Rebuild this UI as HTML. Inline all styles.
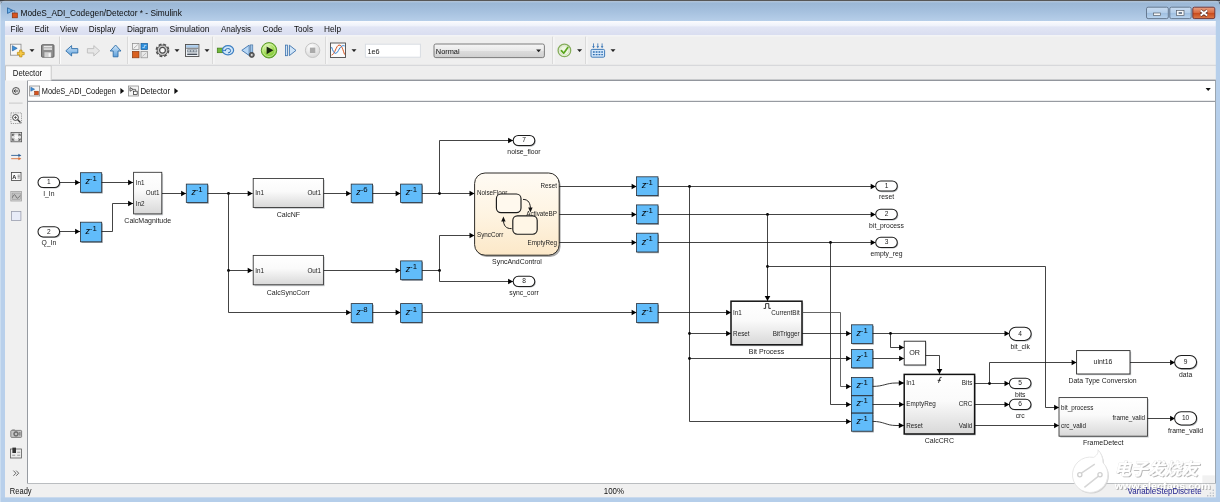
<!DOCTYPE html>
<html lang="en"><head><meta charset="utf-8"><title>ModeS_ADI_Codegen/Detector * - Simulink</title>
<style>
html,body{margin:0;padding:0;background:#b7cfea;overflow:hidden}
body{width:1220px;height:502px;position:relative;font-family:"Liberation Sans","Noto Sans CJK SC",sans-serif}
svg{position:absolute;left:0;top:0;display:block;will-change:transform;transform:translateZ(0)}
svg text{font-family:"Liberation Sans","Noto Sans CJK SC",sans-serif}
</style></head><body>
<svg width="1220" height="502" viewBox="0 0 1220 502">
<defs>
<linearGradient id="title" x1="0" y1="0" x2="0" y2="1"><stop offset="0" stop-color="#97b4d2"/><stop offset=".5" stop-color="#a5c0de"/><stop offset="1" stop-color="#b8d0ea"/></linearGradient>
<linearGradient id="menu" x1="0" y1="0" x2="0" y2="1"><stop offset="0" stop-color="#fbfcfe"/><stop offset=".35" stop-color="#eef1fa"/><stop offset=".4" stop-color="#e2e6f5"/><stop offset="1" stop-color="#d9ddf0"/></linearGradient>
<linearGradient id="g1" x1="0" y1="0" x2="0" y2="1"><stop offset="0" stop-color="#ffffff"/><stop offset=".45" stop-color="#fafafa"/><stop offset="1" stop-color="#d8d8d8"/></linearGradient>
<linearGradient id="chart" x1="0" y1="0" x2="0" y2="1"><stop offset="0" stop-color="#fffbf4"/><stop offset=".5" stop-color="#fef4e2"/><stop offset="1" stop-color="#fce8c8"/></linearGradient>
<linearGradient id="btn" x1="0" y1="0" x2="0" y2="1"><stop offset="0" stop-color="#c9dcf1"/><stop offset=".5" stop-color="#b3cde9"/><stop offset=".52" stop-color="#9fbfe0"/><stop offset="1" stop-color="#b9d3ee"/></linearGradient>
<linearGradient id="cls" x1="0" y1="0" x2="0" y2="1"><stop offset="0" stop-color="#e8a285"/><stop offset=".5" stop-color="#d9683c"/><stop offset=".52" stop-color="#c9491b"/><stop offset="1" stop-color="#dc7a48"/></linearGradient>
<linearGradient id="combo" x1="0" y1="0" x2="0" y2="1"><stop offset="0" stop-color="#f6f6f6"/><stop offset=".5" stop-color="#e9e9e9"/><stop offset=".52" stop-color="#dcdcdc"/><stop offset="1" stop-color="#cfcfcf"/></linearGradient>
<linearGradient id="bluearrow" x1="0" y1="0" x2="0" y2="1"><stop offset="0" stop-color="#d2e7f9"/><stop offset="1" stop-color="#5c9fdb"/></linearGradient>
<radialGradient id="green" cx=".4" cy=".3" r=".8"><stop offset="0" stop-color="#e4f8be"/><stop offset=".55" stop-color="#9ad84a"/><stop offset="1" stop-color="#5fae26"/></radialGradient>
<radialGradient id="greyb" cx=".4" cy=".3" r=".8"><stop offset="0" stop-color="#ffffff"/><stop offset="1" stop-color="#d2d2d2"/></radialGradient>
<filter id="sh" x="-20%" y="-20%" width="140%" height="140%"><feGaussianBlur stdDeviation=".7"/></filter>
</defs>

<rect x="0" y="0" width="1220" height="502" fill="#b7cfea"/>
<rect x="0" y="0" width="1220" height="22" fill="url(#title)"/>
<rect x="0" y="0" width="1220" height="1.25" fill="#575757"/>
<path d="M0 0 H5 Q1.2 1.2 0 5.5 Z" fill="#3e4249"/><path d="M1220 0 H1216 Q1219 1 1220 4.5 Z" fill="#3e4249"/>
<rect x="0" y="1.25" width="1220" height="1" fill="#c9dbee" opacity=".8"/>
<rect x="5" y="21" width="1211" height="14.4" fill="url(#menu)"/>
<rect x="5" y="35.3" width="1211" height="30.2" fill="#efefef"/>
<rect x="5" y="35.3" width="1211" height="1" fill="#f9f9f9"/>
<rect x="5" y="64.8" width="1211" height="1" fill="#d0d0d0"/>
<rect x="5" y="65.8" width="1211" height="15" fill="#eeeeee"/>
<rect x="5" y="80" width="1211" height="22" fill="#f0f0f0"/>
<rect x="27.5" y="80.5" width="1188" height="20.8" fill="#fff" stroke="#979ba1" stroke-width="1"/>
<rect x="5" y="101" width="23" height="396" fill="#f0f0f0"/>
<rect x="27.5" y="101.5" width="1188" height="382" fill="#fff" stroke="#979ba1" stroke-width="1"/>
<rect x="5" y="483.6" width="1211" height="14" fill="#f0f0f0"/>
<rect x="0" y="21" width="5" height="481" fill="#b9d0eb"/>
<rect x="1215.8" y="21" width="4.2" height="481" fill="#b6cfeb"/>
<rect x="0" y="497.6" width="1220" height="4.4" fill="#b5ceea"/>
<rect x="0" y="2" width="1" height="500" fill="#d3e2f2" opacity=".7"/>
<g transform="translate(7,7)"><path d="M0.5 0.8 L6.2 3.6 L0.5 6.4 Z" fill="#6fb2ea" stroke="#1f5f9f" stroke-width=".8"/><path d="M3 3.6 H7.8 V6" fill="none" stroke="#3a6ea5" stroke-width=".7"/><rect x="5.3" y="6" width="5" height="4.8" fill="#d9541e" stroke="#8a2f0a" stroke-width=".7"/></g>
<text x="20.5" y="16.2" font-size="9.6" text-anchor="start" fill="#0d0d0d" textLength="161.4" lengthAdjust="spacingAndGlyphs">ModeS_ADI_Codegen/Detector * - Simulink</text>
<rect x="1146.5" y="7.2" width="21.8" height="11.4" rx="1.6" fill="url(#btn)" stroke="#5f7288" stroke-width=".9"/>
<rect x="1169.8" y="7.2" width="21.4" height="11.4" rx="1.6" fill="url(#btn)" stroke="#5f7288" stroke-width=".9"/>
<rect x="1192.8" y="7.2" width="22" height="11.4" rx="1.6" fill="url(#cls)" stroke="#6d2a2a" stroke-width=".9"/>
<rect x="1153.4" y="13" width="7.2" height="2.6" fill="#f4f6f8" stroke="#57606b" stroke-width=".7"/>
<rect x="1176.6" y="10.4" width="7.4" height="5.2" fill="#f4f6f8" stroke="#57606b" stroke-width=".7"/><rect x="1178.6" y="12.2" width="3.4" height="1.6" fill="#53657c"/>
<path d="M1200.6 10.6 L1207.2 15.6 M1207.2 10.6 L1200.6 15.6" stroke="#5a2a20" stroke-width="3.2"/><path d="M1200.6 10.6 L1207.2 15.6 M1207.2 10.6 L1200.6 15.6" stroke="#fff" stroke-width="1.9"/>
<text x="10.5" y="32.2" font-size="9.2" text-anchor="start" fill="#111" textLength="13" lengthAdjust="spacingAndGlyphs">File</text>
<text x="34.5" y="32.2" font-size="9.2" text-anchor="start" fill="#111" textLength="14.3" lengthAdjust="spacingAndGlyphs">Edit</text>
<text x="60" y="32.2" font-size="9.2" text-anchor="start" fill="#111" textLength="17.6" lengthAdjust="spacingAndGlyphs">View</text>
<text x="88.8" y="32.2" font-size="9.2" text-anchor="start" fill="#111" textLength="26.7" lengthAdjust="spacingAndGlyphs">Display</text>
<text x="127" y="32.2" font-size="9.2" text-anchor="start" fill="#111" textLength="31" lengthAdjust="spacingAndGlyphs">Diagram</text>
<text x="169.5" y="32.2" font-size="9.2" text-anchor="start" fill="#111" textLength="40" lengthAdjust="spacingAndGlyphs">Simulation</text>
<text x="221" y="32.2" font-size="9.2" text-anchor="start" fill="#111" textLength="30" lengthAdjust="spacingAndGlyphs">Analysis</text>
<text x="262.5" y="32.2" font-size="9.2" text-anchor="start" fill="#111" textLength="20" lengthAdjust="spacingAndGlyphs">Code</text>
<text x="294" y="32.2" font-size="9.2" text-anchor="start" fill="#111" textLength="19" lengthAdjust="spacingAndGlyphs">Tools</text>
<text x="324" y="32.2" font-size="9.2" text-anchor="start" fill="#111" textLength="17" lengthAdjust="spacingAndGlyphs">Help</text>
<rect x="59" y="36.6" width="1" height="27.4" fill="#d2d2d2"/><rect x="60" y="36.6" width="1" height="27.4" fill="#fbfbfb"/>
<rect x="127.3" y="36.6" width="1" height="27.4" fill="#d2d2d2"/><rect x="128.3" y="36.6" width="1" height="27.4" fill="#fbfbfb"/>
<rect x="212.3" y="36.6" width="1" height="27.4" fill="#d2d2d2"/><rect x="213.3" y="36.6" width="1" height="27.4" fill="#fbfbfb"/>
<rect x="325.3" y="36.6" width="1" height="27.4" fill="#d2d2d2"/><rect x="326.3" y="36.6" width="1" height="27.4" fill="#fbfbfb"/>
<rect x="552.3" y="36.6" width="1" height="27.4" fill="#d2d2d2"/><rect x="553.3" y="36.6" width="1" height="27.4" fill="#fbfbfb"/>
<rect x="585.3" y="36.6" width="1" height="27.4" fill="#d2d2d2"/><rect x="586.3" y="36.6" width="1" height="27.4" fill="#fbfbfb"/>
<g transform="translate(10,43.7)"><rect x=".5" y=".5" width="10.5" height="11" fill="#f7f7f7" stroke="#8a8a8a" stroke-width=".8"/><path d="M2.4 2 L7.2 4.6 L2.4 7.2 Z" fill="#3d8fd8" stroke="#1e5a98" stroke-width=".6"/><path d="M7.4 8.6 h2.2 v-2.2 h2.4 v2.2 h2.2 v2.4 h-2.2 v2.2 h-2.4 v-2.2 h-2.2 Z" fill="#f7c948" stroke="#b98a10" stroke-width=".7"/></g>
<path d="M29.5 49.2 h5 l-2.5 2.7 Z" fill="#222"/>
<g transform="translate(41,44.2)"><rect x=".5" y=".5" width="12.5" height="12.5" rx="1" fill="#8d8d8d" stroke="#5e5e5e" stroke-width=".9"/><rect x="2.6" y="1.6" width="8.4" height="4" fill="#e8e8e8"/><rect x="2.6" y="3.2" width="8.4" height=".9" fill="#9a9a9a"/><rect x="3.4" y="8" width="6.8" height="5" fill="#d0d0d0"/><rect x="7.6" y="9" width="2" height="3.6" fill="#f6f6f6"/></g>
<path transform="translate(0,.6)" d="M65.8 50.2 L71.6 45 V48 H77.8 V52.4 H71.6 V55.4 Z" fill="url(#bluearrow)" stroke="#2f6ea8" stroke-width=".9" stroke-linejoin="round"/>
<path transform="translate(0,.6)" d="M99.6 50.2 L93.8 45 V48 H87.4 V52.4 H93.8 V55.4 Z" fill="#e6e6e6" stroke="#bdbdbd" stroke-width=".9" stroke-linejoin="round"/>
<path transform="translate(0,.4)" d="M115.6 44.6 L121 50.6 H118 V56.4 H113.2 V50.6 H110.2 Z" fill="url(#bluearrow)" stroke="#2f6ea8" stroke-width=".9" stroke-linejoin="round"/>
<g transform="translate(132,43)"><rect x=".4" y=".4" width="6.6" height="6.2" fill="#f2f2f2" stroke="#8a8a8a" stroke-width=".7"/><path d="M1.6 5.4 L5.8 1.6" stroke="#9a9a9a" stroke-width=".7"/><rect x="9" y=".4" width="6.6" height="6.2" fill="#2d8fdd" stroke="#1c5c98" stroke-width=".7"/><path d="M10.4 4.6 h2 v-2.2 h2" fill="none" stroke="#d8ecfb" stroke-width=".7"/><rect x=".4" y="8.4" width="6.6" height="6.4" fill="#d9601f" stroke="#8a3a10" stroke-width=".7"/><rect x="9" y="8.4" width="6.6" height="6.4" fill="#e9e9e9" stroke="#8a8a8a" stroke-width=".7"/><path d="M10.4 13.4 L14.4 9.8" stroke="#aaa" stroke-width=".7"/></g>
<g transform="translate(162.5,50.3)"><circle r="6.1" fill="none" stroke="#505050" stroke-width="1.6" stroke-dasharray="2.9 1.9"/><circle r="5.3" fill="#c9c9c9" stroke="#505050" stroke-width=".9"/><circle r="2.9" fill="#fafafa" stroke="#4a4a4a" stroke-width="1.2"/></g>
<path d="M174.5 49.2 h5 l-2.5 2.7 Z" fill="#222"/>
<g transform="translate(185,44)"><rect x=".5" y=".5" width="13.4" height="12" fill="#eef2f6" stroke="#4d4d4d" stroke-width=".9"/><rect x="1.2" y="1.2" width="12" height="2.4" fill="#a9cbec"/><rect x="1.2" y="3.8" width="12" height=".8" fill="#4d4d4d"/><rect x="2.2" y="5.4" width="10" height="3" fill="#7c8792"/><path d="M3 6.9 h2 M6 6.9 h2 M9 6.9 h2.4" stroke="#e8eef4" stroke-width="1"/><rect x="2.2" y="9.6" width="10" height="1.4" fill="#4a525c"/></g>
<path d="M204.5 49.2 h5 l-2.5 2.7 Z" fill="#222"/>
<g transform="translate(217,44.5)"><rect x=".3" y="3.6" width="5.4" height="4.6" fill="#72b83c" stroke="#3f7a18" stroke-width=".7"/><ellipse cx="11" cy="5.8" rx="5.6" ry="4.6" fill="#cfe6fa" stroke="#3d7fc2" stroke-width="1.2"/><path d="M8.4 6.6 a2.6 2.2 0 1 1 2.6 1.8" fill="none" stroke="#2e6eb3" stroke-width="1"/><path d="M5.6 5.9 h3" stroke="#3d7fc2" stroke-width="1"/></g>
<g transform="translate(241,44.5)"><path d="M8.2 .6 L.8 5.8 L8.2 11 Z" fill="#b9d8f5" stroke="#3d73ad" stroke-width=".9" stroke-linejoin="round"/><rect x="9.6" y=".4" width="2.2" height="8" fill="#9cc4ea" stroke="#3d6a9a" stroke-width=".6"/><circle cx="10.8" cy="10.4" r="2.5" fill="#6a6a6a" stroke="#3a3a3a" stroke-width=".8"/><circle cx="10.8" cy="10.4" r=".9" fill="#eee"/></g>
<circle cx="269" cy="50.3" r="7.7" fill="url(#green)" stroke="#5c9a2e" stroke-width="1"/><circle cx="269" cy="50.3" r="6.2" fill="none" stroke="#e8fbc8" stroke-width=".8" opacity=".8"/><path d="M266.6 46.4 L273.4 50.3 L266.6 54.2 Z" fill="#1a2a10"/>
<g transform="translate(285,44.8)"><rect x=".5" y=".3" width="2" height="10.6" fill="#cfe4f8" stroke="#3d73ad" stroke-width=".8"/><path d="M4.4 .4 L11 5.6 L4.4 10.8 Z" fill="#cfe4f8" stroke="#3d73ad" stroke-width=".9" stroke-linejoin="round"/></g>
<circle cx="312.6" cy="50.3" r="7.2" fill="url(#greyb)" stroke="#c4c4c4" stroke-width="1"/><rect x="309.9" y="47.6" width="5.4" height="5.4" fill="#a9a9a9"/>
<g transform="translate(330,42.5)"><rect x=".5" y=".5" width="15" height="14.5" fill="#fbfbfb" stroke="#4a4a4a" stroke-width=".9"/><path d="M1.6 12.6 C5 12 6 3 9 2.6 S13 8 14.6 12" fill="none" stroke="#d9541e" stroke-width="1"/><path d="M1.6 4.6 C4 12 6 12.4 8.4 8 S12.4 2.6 14.6 3.4" fill="none" stroke="#2d7fd0" stroke-width="1"/></g>
<path d="M351.5 49.2 h5 l-2.5 2.7 Z" fill="#222"/>
<rect x="365.4" y="44.2" width="55" height="13" fill="#fff" stroke="#d9dde3" stroke-width="1"/>
<text x="367.4" y="53.8" font-size="7.3" text-anchor="start" fill="#222">1e6</text>
<rect x="434" y="44" width="110.4" height="13.6" rx="1.8" fill="url(#combo)" stroke="#707070" stroke-width=".9"/>
<text x="435.8" y="53.8" font-size="7.4" text-anchor="start" fill="#111">Normal</text>
<path d="M536.1 49.5 h5 l-2.5 2.7 Z" fill="#222"/>
<circle cx="564.4" cy="50.4" r="6.3" fill="#f4f8ee" stroke="#86ad5c" stroke-width="1.3"/><circle cx="564.4" cy="50.4" r="4.7" fill="#eef6e2" stroke="#c5d6ae" stroke-width=".7"/><path d="M561.4 50.6 L563.7 53.2 L567.8 47.4" fill="none" stroke="#5aa61e" stroke-width="1.7" stroke-linecap="round" stroke-linejoin="round"/>
<path d="M577.1 49.2 h5 l-2.5 2.7 Z" fill="#222"/>
<g transform="translate(590.5,43)"><rect x=".5" y="6.4" width="13.6" height="7.8" rx="1.2" fill="#d6e8fa" stroke="#2f6fb2" stroke-width=".9"/><path d="M3 .4 v3.4 M7.3 .4 v3.4 M11.6 .4 v3.4" stroke="#2f6fb2" stroke-width=".8"/><path d="M1.7 3.2 h2.6 l-1.3 2 Z M6 3.2 h2.6 l-1.3 2 Z M10.3 3.2 h2.6 l-1.3 2 Z" fill="#2f6fb2"/><path d="M2.4 9 h1.8 M5.2 9 h1.8 M8 9 h1.8 M10.8 9 h1.6 M2.4 11.6 h1.8 M5.2 11.6 h1.8 M8 11.6 h1.8 M10.8 11.6 h1.6" stroke="#2f6fb2" stroke-width="1.4"/></g>
<path d="M610.5 49.2 h5 l-2.5 2.7 Z" fill="#222"/>
<path d="M5.5 80.4 V65.8 H51.2 V80.4" fill="#fbfbfb" stroke="#c4c4c4" stroke-width=".9"/>
<rect x="51.8" y="79.6" width="1164" height="1" fill="#8f949a"/>
<text x="12.8" y="75.9" font-size="8.8" text-anchor="start" fill="#111" textLength="29.4" lengthAdjust="spacingAndGlyphs">Detector</text>
<circle cx="16" cy="91" r="3.5" fill="#dcdcdc" stroke="#4a4a4a" stroke-width=".9"/><path d="M14 91 h4 M14 91 l1.7 -1.6 M14 91 l1.7 1.6" stroke="#333" stroke-width=".8" fill="none"/>
<g transform="translate(29.2,85.6)"><rect x=".4" y=".4" width="10" height="10" fill="#f4f4f4" stroke="#8e8e8e" stroke-width=".8"/><path d="M1.6 1.6 L5.4 3.6 L1.6 5.6 Z" fill="#3d8fd8" stroke="#1e5a98" stroke-width=".5"/><rect x="5.4" y="5.6" width="3.8" height="3.6" fill="#d9541e" stroke="#8a2f0a" stroke-width=".5"/></g>
<text x="41.8" y="93.8" font-size="8.8" text-anchor="start" fill="#111" textLength="74" lengthAdjust="spacingAndGlyphs">ModeS_ADI_Codegen</text>
<path d="M120.4 88 L124.2 91 L120.4 94 Z" fill="#111"/>
<g transform="translate(128.2,85.6)"><rect x=".4" y=".4" width="10" height="10" fill="#f4f4f4" stroke="#8e8e8e" stroke-width=".8"/><path d="M1.8 2 L5 3.8 L1.8 5.6 Z" fill="none" stroke="#222" stroke-width=".7"/><path d="M5 3.8 h2.4 v1.6" fill="none" stroke="#222" stroke-width=".6"/><rect x="5.4" y="5.6" width="3.6" height="3.4" fill="#fff" stroke="#222" stroke-width=".7"/></g>
<text x="140.4" y="93.8" font-size="8.8" text-anchor="start" fill="#111" textLength="29.6" lengthAdjust="spacingAndGlyphs">Detector</text>
<path d="M174.4 88 L178.2 91 L174.4 94 Z" fill="#111"/>
<path d="M1205.6 88 h5.2 l-2.6 2.9 Z" fill="#111"/>
<rect x="9" y="102.6" width="13.6" height="1" fill="#c8c8c8"/>
<g transform="translate(10.5,112.5)"><rect x=".4" y=".4" width="10.6" height="10.6" fill="none" stroke="#777" stroke-width=".7" stroke-dasharray="1.2 1"/><circle cx="5" cy="5" r="2.9" fill="#fdfdfd" stroke="#333" stroke-width=".9"/><path d="M3.6 5 h2.8 M5 3.6 v2.8" stroke="#333" stroke-width=".7"/><path d="M7.2 7.2 L10 10" stroke="#333" stroke-width="1.3"/></g>
<g transform="translate(10.6,132.2)"><rect x=".4" y=".4" width="10.6" height="9.2" fill="#dedede" stroke="#555" stroke-width=".8"/><rect x="3.4" y="3" width="4.6" height="4" fill="#f8f8f8"/><path d="M1.8 3.8 V2 H3.8 M7.6 2 H9.6 V3.8 M9.6 6.2 V8 H7.6 M3.8 8 H1.8 V6.2" fill="none" stroke="#444" stroke-width=".8"/><path d="M2 2.2 L3.8 3.8 M9.4 2.2 L7.6 3.8 M9.4 7.8 L7.6 6.2 M2 7.8 L3.8 6.2" stroke="#444" stroke-width=".7"/></g>
<path d="M11.2 155.4 H19.4" fill="none" stroke="#2f5f95" stroke-width=".9"/><path d="M21.4 155.4 L18.4 153.8 V157 Z" fill="#2f5f95"/><path d="M11.2 158.7 H19.4" fill="none" stroke="#d9703a" stroke-width=".9"/><path d="M21.4 158.7 L18.4 157.1 V160.3 Z" fill="#d9703a"/>
<g transform="translate(11,172.2)"><rect x=".4" y=".4" width="9.6" height="8" fill="#fafafa" stroke="#444" stroke-width=".8"/><path d="M6.6 3 h2.2 M6.6 4.4 h2.2 M6.6 5.8 h2.2" stroke="#555" stroke-width=".6"/></g>
<text x="14.2" y="178.9" font-size="5.6" text-anchor="middle" fill="#222" font-weight="bold">A</text>
<g transform="translate(10.4,191.2)"><rect x=".4" y=".4" width="10.8" height="9.4" fill="#d9d9d9" stroke="#a2a2a2" stroke-width=".8"/><rect x="1.7" y="1.8" width="8.2" height="6.4" fill="#c3c3c3" stroke="#8c8c8c" stroke-width=".5"/><path d="M2 6.4 C3.4 2.6 4.6 3 5.6 5.4 S7.8 7.4 9.6 4.4" fill="none" stroke="#5a5a5a" stroke-width=".8"/></g>
<rect x="11.5" y="211.5" width="9.4" height="9" fill="#e8ecf8" stroke="#9a9fae" stroke-width=".8"/>
<g transform="translate(10.4,428.6)"><rect x=".4" y="1.8" width="10.8" height="7" rx=".8" fill="#c6c6c6" stroke="#6a6a6a" stroke-width=".8"/><rect x="1.8" y=".8" width="2.6" height="1.2" fill="#8a8a8a"/><circle cx="5.6" cy="5.3" r="2.4" fill="#7a7a7a" stroke="#5a5a5a" stroke-width=".6"/><circle cx="5.6" cy="5.3" r="1" fill="#d8d8d8"/><rect x="8.6" y="3.4" width="1.6" height="3.6" fill="#8c8c8c"/></g>
<g transform="translate(10.2,447.6)"><rect x=".4" y="1.4" width="11" height="9" fill="#ededed" stroke="#5a5a5a" stroke-width=".8"/><rect x="2.2" y="0" width="3.6" height="5.4" fill="#333"/><path d="M2 7.6 h3 M7 4.6 h3 M7 7.6 h3" stroke="#9a9a9a" stroke-width="1.1"/></g>
<path d="M13.4 470.6 L15.9 473.2 L13.4 475.8 M16.2 470.6 L18.7 473.2 L16.2 475.8" fill="none" stroke="#444" stroke-width=".8"/>
<text x="9.8" y="494.1" font-size="8.8" text-anchor="start" fill="#111" textLength="21.8" lengthAdjust="spacingAndGlyphs">Ready</text>
<text x="613.9" y="494.2" font-size="8.8" text-anchor="middle" fill="#111" textLength="20.2" lengthAdjust="spacingAndGlyphs">100%</text>
<rect x="39" y="178.4" width="21.6" height="10.2" rx="5.1" fill="#9a9ea2" opacity=".7" filter="url(#sh)"/>
<rect x="38" y="177.3" width="21.6" height="10.2" rx="5.1" fill="#fff" stroke="#1e1e1e" stroke-width="1.05"/>
<text x="48.8" y="184.3" font-size="6.6" text-anchor="middle" fill="#222">1</text>
<text x="48.8" y="195.8" font-size="6.8" text-anchor="middle" fill="#1c1c1c">I_In</text>
<rect x="39" y="227.8" width="21.6" height="10.2" rx="5.1" fill="#9a9ea2" opacity=".7" filter="url(#sh)"/>
<rect x="38" y="226.7" width="21.6" height="10.2" rx="5.1" fill="#fff" stroke="#1e1e1e" stroke-width="1.05"/>
<text x="48.8" y="233.7" font-size="6.6" text-anchor="middle" fill="#222">2</text>
<text x="48.8" y="245.2" font-size="6.8" text-anchor="middle" fill="#1c1c1c">Q_In</text>
<path d="M59.6 182.5 L80 182.5" fill="none" stroke="#1a1a1a" stroke-width="0.82"/>
<path d="M80 182.5 L75.1 179.7 L75.1 185.3 Z" fill="#000"/>
<path d="M59.6 231.5 L80 231.5" fill="none" stroke="#1a1a1a" stroke-width="0.82"/>
<path d="M80 231.5 L75.1 228.7 L75.1 234.3 Z" fill="#000"/>
<rect x="81.4" y="173.9" width="21.3" height="19.6" fill="#7d868e" opacity=".8" filter="url(#sh)"/>
<rect x="80.4" y="172.7" width="21.3" height="19.6" fill="#61bcfa" stroke="#2b2f36" stroke-width=".8"/>
<text x="87.75" y="184.4" font-size="9" font-style="italic" text-anchor="middle" fill="#05080c">z</text>
<text x="93.25" y="181.1" font-size="7.8" text-anchor="middle" fill="#05080c">-1</text>
<rect x="81.4" y="223.4" width="21.3" height="19.6" fill="#7d868e" opacity=".8" filter="url(#sh)"/>
<rect x="80.4" y="222.2" width="21.3" height="19.6" fill="#61bcfa" stroke="#2b2f36" stroke-width=".8"/>
<text x="87.75" y="233.9" font-size="9" font-style="italic" text-anchor="middle" fill="#05080c">z</text>
<text x="93.25" y="230.6" font-size="7.8" text-anchor="middle" fill="#05080c">-1</text>
<path d="M101.5 182.5 L133 182.5" fill="none" stroke="#1a1a1a" stroke-width="0.82"/>
<path d="M133 182.5 L128.1 179.7 L128.1 185.3 Z" fill="#000"/>
<path d="M101.5 231.5 L112.5 231.5 L112.5 203.5 L133 203.5" fill="none" stroke="#1a1a1a" stroke-width="0.82"/>
<path d="M133 203.5 L128.1 200.7 L128.1 206.3 Z" fill="#000"/>
<rect x="134.9" y="173.7" width="28.2" height="41.6" fill="#b4b8bc" opacity=".7"/>
<rect x="133.6" y="172.3" width="28.2" height="41.6" fill="url(#g1)" stroke="#2e2e2e" stroke-width="0.85"/>
<text x="135.7" y="184.8" font-size="6.3" text-anchor="start" fill="#1c1c1c">In1</text>
<text x="135.7" y="205.7" font-size="6.3" text-anchor="start" fill="#1c1c1c">In2</text>
<text x="159.5" y="195.4" font-size="6.3" text-anchor="end" fill="#1c1c1c">Out1</text>
<text x="147.7" y="223.4" font-size="7" text-anchor="middle" fill="#1c1c1c">CalcMagnitude</text>
<path d="M162 193.5 L186 193.5" fill="none" stroke="#1a1a1a" stroke-width="0.82"/>
<path d="M186 193.5 L181.1 190.7 L181.1 196.3 Z" fill="#000"/>
<rect x="187.3" y="185.3" width="21.4" height="18.4" fill="#7d868e" opacity=".8" filter="url(#sh)"/>
<rect x="186.3" y="184.1" width="21.4" height="18.4" fill="#61bcfa" stroke="#2b2f36" stroke-width=".8"/>
<text x="193.7" y="195.2" font-size="9" font-style="italic" text-anchor="middle" fill="#05080c">z</text>
<text x="199.2" y="191.9" font-size="7.8" text-anchor="middle" fill="#05080c">-1</text>
<path d="M207.5 193.5 L252.6 193.5" fill="none" stroke="#1a1a1a" stroke-width="0.82"/>
<path d="M252.6 193.5 L247.7 190.7 L247.7 196.3 Z" fill="#000"/>
<circle cx="228.5" cy="193.5" r="1.4" fill="#000"/>
<path d="M228.5 193.1 L228.5 270.5 L252.6 270.5" fill="none" stroke="#1a1a1a" stroke-width="0.82"/>
<path d="M252.6 270.5 L247.7 267.7 L247.7 273.3 Z" fill="#000"/>
<circle cx="228.5" cy="270.5" r="1.4" fill="#000"/>
<path d="M228.5 270.2 L228.5 312.5 L351 312.5" fill="none" stroke="#1a1a1a" stroke-width="0.82"/>
<path d="M351 312.5 L346.1 309.7 L346.1 315.3 Z" fill="#000"/>
<rect x="254.5" y="179.9" width="70.2" height="29" fill="#b4b8bc" opacity=".7"/>
<rect x="253.2" y="178.5" width="70.2" height="29" fill="url(#g1)" stroke="#2e2e2e" stroke-width="0.85"/>
<text x="255.3" y="195.4" font-size="6.3" text-anchor="start" fill="#1c1c1c">In1</text>
<text x="321.1" y="195.4" font-size="6.3" text-anchor="end" fill="#1c1c1c">Out1</text>
<text x="288.3" y="216.8" font-size="7" text-anchor="middle" fill="#1c1c1c">CalcNF</text>
<rect x="254.5" y="256.8" width="70.2" height="29.4" fill="#b4b8bc" opacity=".7"/>
<rect x="253.2" y="255.4" width="70.2" height="29.4" fill="url(#g1)" stroke="#2e2e2e" stroke-width="0.85"/>
<text x="255.3" y="272.5" font-size="6.3" text-anchor="start" fill="#1c1c1c">In1</text>
<text x="321.1" y="272.5" font-size="6.3" text-anchor="end" fill="#1c1c1c">Out1</text>
<text x="288.3" y="294.8" font-size="7" text-anchor="middle" fill="#1c1c1c">CalcSyncCorr</text>
<path d="M323.8 193.5 L351 193.5" fill="none" stroke="#1a1a1a" stroke-width="0.82"/>
<path d="M351 193.5 L346.1 190.7 L346.1 196.3 Z" fill="#000"/>
<rect x="352.2" y="185.3" width="21.4" height="18.4" fill="#7d868e" opacity=".8" filter="url(#sh)"/>
<rect x="351.2" y="184.1" width="21.4" height="18.4" fill="#61bcfa" stroke="#2b2f36" stroke-width=".8"/>
<text x="358.6" y="195.2" font-size="9" font-style="italic" text-anchor="middle" fill="#05080c">z</text>
<text x="364.1" y="191.9" font-size="7.8" text-anchor="middle" fill="#05080c">-6</text>
<path d="M372.5 193.5 L400.5 193.5" fill="none" stroke="#1a1a1a" stroke-width="0.82"/>
<path d="M400.5 193.5 L395.6 190.7 L395.6 196.3 Z" fill="#000"/>
<rect x="401.6" y="185.3" width="21.4" height="18.4" fill="#7d868e" opacity=".8" filter="url(#sh)"/>
<rect x="400.6" y="184.1" width="21.4" height="18.4" fill="#61bcfa" stroke="#2b2f36" stroke-width=".8"/>
<text x="408" y="195.2" font-size="9" font-style="italic" text-anchor="middle" fill="#05080c">z</text>
<text x="413.5" y="191.9" font-size="7.8" text-anchor="middle" fill="#05080c">-1</text>
<path d="M422 193.5 L474.4 193.5" fill="none" stroke="#1a1a1a" stroke-width="0.82"/>
<path d="M474.4 193.5 L469.5 190.7 L469.5 196.3 Z" fill="#000"/>
<circle cx="439.5" cy="193.5" r="1.4" fill="#000"/>
<path d="M439.5 193.1 L439.5 140.5 L513 140.5" fill="none" stroke="#1a1a1a" stroke-width="0.82"/>
<path d="M513 140.5 L508.1 137.7 L508.1 143.3 Z" fill="#000"/>
<rect x="514.2" y="136.5" width="21.6" height="10.2" rx="5.1" fill="#9a9ea2" opacity=".7" filter="url(#sh)"/>
<rect x="513.2" y="135.4" width="21.6" height="10.2" rx="5.1" fill="#fff" stroke="#1e1e1e" stroke-width="1.05"/>
<text x="524" y="142.4" font-size="6.6" text-anchor="middle" fill="#222">7</text>
<text x="524" y="153.9" font-size="6.8" text-anchor="middle" fill="#1c1c1c">noise_floor</text>
<path d="M323.8 270.5 L400.5 270.5" fill="none" stroke="#1a1a1a" stroke-width="0.82"/>
<path d="M400.5 270.5 L395.6 267.7 L395.6 273.3 Z" fill="#000"/>
<rect x="401.6" y="262.1" width="21.4" height="18.8" fill="#7d868e" opacity=".8" filter="url(#sh)"/>
<rect x="400.6" y="260.9" width="21.4" height="18.8" fill="#61bcfa" stroke="#2b2f36" stroke-width=".8"/>
<text x="408" y="272.2" font-size="9" font-style="italic" text-anchor="middle" fill="#05080c">z</text>
<text x="413.5" y="268.9" font-size="7.8" text-anchor="middle" fill="#05080c">-1</text>
<path d="M422 270.5 L439.5 270.5 L439.5 235.5 L474.4 235.5" fill="none" stroke="#1a1a1a" stroke-width="0.82"/>
<path d="M474.4 235.5 L469.5 232.7 L469.5 238.3 Z" fill="#000"/>
<circle cx="439.5" cy="270.5" r="1.4" fill="#000"/>
<path d="M439.5 270.2 L439.5 281.5 L513 281.5" fill="none" stroke="#1a1a1a" stroke-width="0.82"/>
<path d="M513 281.5 L508.1 278.7 L508.1 284.3 Z" fill="#000"/>
<rect x="514.2" y="277.4" width="21.6" height="10.2" rx="5.1" fill="#9a9ea2" opacity=".7" filter="url(#sh)"/>
<rect x="513.2" y="276.3" width="21.6" height="10.2" rx="5.1" fill="#fff" stroke="#1e1e1e" stroke-width="1.05"/>
<text x="524" y="283.3" font-size="6.6" text-anchor="middle" fill="#222">8</text>
<text x="524" y="294.8" font-size="6.8" text-anchor="middle" fill="#1c1c1c">sync_corr</text>
<rect x="352.2" y="304.8" width="21.4" height="18.8" fill="#7d868e" opacity=".8" filter="url(#sh)"/>
<rect x="351.2" y="303.6" width="21.4" height="18.8" fill="#61bcfa" stroke="#2b2f36" stroke-width=".8"/>
<text x="358.6" y="314.9" font-size="9" font-style="italic" text-anchor="middle" fill="#05080c">z</text>
<text x="364.1" y="311.6" font-size="7.8" text-anchor="middle" fill="#05080c">-8</text>
<path d="M372.5 312.5 L400.5 312.5" fill="none" stroke="#1a1a1a" stroke-width="0.82"/>
<path d="M400.5 312.5 L395.6 309.7 L395.6 315.3 Z" fill="#000"/>
<rect x="401.6" y="304.8" width="21.4" height="18.8" fill="#7d868e" opacity=".8" filter="url(#sh)"/>
<rect x="400.6" y="303.6" width="21.4" height="18.8" fill="#61bcfa" stroke="#2b2f36" stroke-width=".8"/>
<text x="408" y="314.9" font-size="9" font-style="italic" text-anchor="middle" fill="#05080c">z</text>
<text x="413.5" y="311.6" font-size="7.8" text-anchor="middle" fill="#05080c">-1</text>
<path d="M422 312.5 L636.5 312.5" fill="none" stroke="#1a1a1a" stroke-width="0.82"/>
<path d="M636.5 312.5 L631.6 309.7 L631.6 315.3 Z" fill="#000"/>
<rect x="476" y="174.6" width="84.6" height="82.4" rx="10.5" fill="#8e8e8e" opacity=".75" filter="url(#sh)"/>
<rect x="474.6" y="173" width="84.6" height="82.2" rx="10.5" fill="url(#chart)" stroke="#2e2c28" stroke-width="1"/>
<text x="477" y="194.9" font-size="6.3" text-anchor="start" fill="#1c1c1c">NoiseFloor</text>
<text x="477" y="237.4" font-size="6.3" text-anchor="start" fill="#1c1c1c">SyncCorr</text>
<text x="557" y="188.4" font-size="6.3" text-anchor="end" fill="#1c1c1c">Reset</text>
<text x="557" y="216.4" font-size="6.3" text-anchor="end" fill="#1c1c1c">ActivateBP</text>
<text x="557" y="244.6" font-size="6.3" text-anchor="end" fill="#1c1c1c">EmptyReg</text>
<rect x="496.4" y="194" width="24.6" height="18.6" rx="4.6" fill="#fff9ee" stroke="#1a1a1a" stroke-width="1.15"/>
<rect x="512.8" y="215.8" width="24.4" height="18.4" rx="4.6" fill="#fff6e6" stroke="#1a1a1a" stroke-width="1.15"/>
<path d="M523 199.4 C528.6 199.4 530.6 203.4 530.4 209.6" fill="none" stroke="#111" stroke-width=".95"/><path d="M530.4 212.4 L528.2 207.4 L532.6 207.4 Z" fill="#111"/>
<path d="M511.6 228.6 C506 228.8 503.4 225.6 503.4 219.6" fill="none" stroke="#111" stroke-width=".95"/><path d="M503.4 216.4 L501.2 221.4 L505.6 221.4 Z" fill="#111"/>
<text x="517" y="263.8" font-size="6.9" text-anchor="middle" fill="#1c1c1c">SyncAndControl</text>
<path d="M559.2 186.5 L636.5 186.5" fill="none" stroke="#1a1a1a" stroke-width="0.82"/>
<path d="M636.5 186.5 L631.6 183.7 L631.6 189.3 Z" fill="#000"/>
<path d="M559.2 214.5 L636.5 214.5" fill="none" stroke="#1a1a1a" stroke-width="0.82"/>
<path d="M636.5 214.5 L631.6 211.7 L631.6 217.3 Z" fill="#000"/>
<path d="M559.2 242.5 L636.5 242.5" fill="none" stroke="#1a1a1a" stroke-width="0.82"/>
<path d="M636.5 242.5 L631.6 239.7 L631.6 245.3 Z" fill="#000"/>
<rect x="637.4" y="178" width="21.6" height="18.8" fill="#7d868e" opacity=".8" filter="url(#sh)"/>
<rect x="636.4" y="176.8" width="21.6" height="18.8" fill="#61bcfa" stroke="#2b2f36" stroke-width=".8"/>
<text x="643.9" y="188.1" font-size="9" font-style="italic" text-anchor="middle" fill="#05080c">z</text>
<text x="649.4" y="184.8" font-size="7.8" text-anchor="middle" fill="#05080c">-1</text>
<rect x="637.4" y="206.1" width="21.6" height="18.8" fill="#7d868e" opacity=".8" filter="url(#sh)"/>
<rect x="636.4" y="204.9" width="21.6" height="18.8" fill="#61bcfa" stroke="#2b2f36" stroke-width=".8"/>
<text x="643.9" y="216.2" font-size="9" font-style="italic" text-anchor="middle" fill="#05080c">z</text>
<text x="649.4" y="212.9" font-size="7.8" text-anchor="middle" fill="#05080c">-1</text>
<rect x="637.4" y="234.4" width="21.6" height="18.8" fill="#7d868e" opacity=".8" filter="url(#sh)"/>
<rect x="636.4" y="233.2" width="21.6" height="18.8" fill="#61bcfa" stroke="#2b2f36" stroke-width=".8"/>
<text x="643.9" y="244.5" font-size="9" font-style="italic" text-anchor="middle" fill="#05080c">z</text>
<text x="649.4" y="241.2" font-size="7.8" text-anchor="middle" fill="#05080c">-1</text>
<path d="M658 186.5 L875.6 186.5" fill="none" stroke="#1a1a1a" stroke-width="0.82"/>
<path d="M875.6 186.5 L870.7 183.7 L870.7 189.3 Z" fill="#000"/>
<path d="M658 214.5 L875.6 214.5" fill="none" stroke="#1a1a1a" stroke-width="0.82"/>
<path d="M875.6 214.5 L870.7 211.7 L870.7 217.3 Z" fill="#000"/>
<path d="M658 242.5 L875.6 242.5" fill="none" stroke="#1a1a1a" stroke-width="0.82"/>
<path d="M875.6 242.5 L870.7 239.7 L870.7 245.3 Z" fill="#000"/>
<rect x="876.7" y="182" width="21.6" height="10.2" rx="5.1" fill="#9a9ea2" opacity=".7" filter="url(#sh)"/>
<rect x="875.7" y="180.9" width="21.6" height="10.2" rx="5.1" fill="#fff" stroke="#1e1e1e" stroke-width="1.05"/>
<text x="886.5" y="187.9" font-size="6.6" text-anchor="middle" fill="#222">1</text>
<text x="886.5" y="199.4" font-size="6.8" text-anchor="middle" fill="#1c1c1c">reset</text>
<rect x="876.7" y="210.3" width="21.6" height="10.2" rx="5.1" fill="#9a9ea2" opacity=".7" filter="url(#sh)"/>
<rect x="875.7" y="209.2" width="21.6" height="10.2" rx="5.1" fill="#fff" stroke="#1e1e1e" stroke-width="1.05"/>
<text x="886.5" y="216.2" font-size="6.6" text-anchor="middle" fill="#222">2</text>
<text x="886.5" y="227.7" font-size="6.8" text-anchor="middle" fill="#1c1c1c">bit_process</text>
<rect x="876.7" y="238.4" width="21.6" height="10.2" rx="5.1" fill="#9a9ea2" opacity=".7" filter="url(#sh)"/>
<rect x="875.7" y="237.3" width="21.6" height="10.2" rx="5.1" fill="#fff" stroke="#1e1e1e" stroke-width="1.05"/>
<text x="886.5" y="244.3" font-size="6.6" text-anchor="middle" fill="#222">3</text>
<text x="886.5" y="255.8" font-size="6.8" text-anchor="middle" fill="#1c1c1c">empty_reg</text>
<rect x="637.4" y="304.8" width="21.6" height="18.8" fill="#7d868e" opacity=".8" filter="url(#sh)"/>
<rect x="636.4" y="303.6" width="21.6" height="18.8" fill="#61bcfa" stroke="#2b2f36" stroke-width=".8"/>
<text x="643.9" y="314.9" font-size="9" font-style="italic" text-anchor="middle" fill="#05080c">z</text>
<text x="649.4" y="311.6" font-size="7.8" text-anchor="middle" fill="#05080c">-1</text>
<path d="M658 312.5 L731 312.5" fill="none" stroke="#1a1a1a" stroke-width="0.82"/>
<path d="M731 312.5 L726.1 309.7 L726.1 315.3 Z" fill="#000"/>
<circle cx="689.5" cy="186.5" r="1.4" fill="#000"/>
<path d="M689.5 186.1 L689.5 421.5 L851 421.5" fill="none" stroke="#1a1a1a" stroke-width="0.82"/>
<path d="M851 421.5 L846.1 418.7 L846.1 424.3 Z" fill="#000"/>
<circle cx="689.5" cy="333.5" r="1.4" fill="#000"/>
<path d="M689.5 333.5 L731 333.5" fill="none" stroke="#1a1a1a" stroke-width="0.82"/>
<path d="M731 333.5 L726.1 330.7 L726.1 336.3 Z" fill="#000"/>
<circle cx="689.5" cy="358.5" r="1.4" fill="#000"/>
<path d="M689.5 358.5 L851 358.5" fill="none" stroke="#1a1a1a" stroke-width="0.82"/>
<path d="M851 358.5 L846.1 355.7 L846.1 361.3 Z" fill="#000"/>
<circle cx="767.5" cy="214.5" r="1.4" fill="#000"/>
<path d="M767.5 214.3 L767.5 301" fill="none" stroke="#1a1a1a" stroke-width="0.82"/>
<path d="M767.5 301 L764.7 296.1 L770.3 296.1 Z" fill="#000"/>
<circle cx="767.5" cy="266.5" r="1.4" fill="#000"/>
<path d="M767 266.5 L1045.5 266.5 L1045.5 407.5 L1059 407.5" fill="none" stroke="#1a1a1a" stroke-width="0.82"/>
<path d="M1059 407.5 L1054.1 404.7 L1054.1 410.3 Z" fill="#000"/>
<circle cx="830.5" cy="242.5" r="1.4" fill="#000"/>
<path d="M830.5 242.4 L830.5 404.5 L851 404.5" fill="none" stroke="#1a1a1a" stroke-width="0.82"/>
<path d="M851 404.5 L846.1 401.7 L846.1 407.3 Z" fill="#000"/>
<rect x="732.3" y="302.6" width="71" height="43.6" fill="#b4b8bc" opacity=".7"/>
<rect x="731" y="301.2" width="71" height="43.6" fill="url(#g1)" stroke="#111" stroke-width="1.5"/>
<text x="733.1" y="314.6" font-size="6.3" text-anchor="start" fill="#1c1c1c">In1</text>
<text x="733.1" y="336.1" font-size="6.3" text-anchor="start" fill="#1c1c1c">Reset</text>
<text x="799.7" y="314.6" font-size="6.3" text-anchor="end" fill="#1c1c1c">CurrentBit</text>
<text x="799.7" y="336.1" font-size="6.3" text-anchor="end" fill="#1c1c1c">BitTrigger</text>
<text x="766.5" y="354.4" font-size="7" text-anchor="middle" fill="#1c1c1c">Bit Process</text>
<path d="M763.6 308.4 h2 v-4.8 h3.2 v4.8 h2" fill="none" stroke="#111" stroke-width=".85"/>
<path d="M802 312.5 L840.5 312.5 L840.5 386.5 L851 386.5" fill="none" stroke="#444" stroke-width="0.82"/>
<path d="M851 386.5 L846.1 383.7 L846.1 389.3 Z" fill="#000"/>
<path d="M802 333.5 L851 333.5" fill="none" stroke="#1a1a1a" stroke-width="0.82"/>
<path d="M851 333.5 L846.1 330.7 L846.1 336.3 Z" fill="#000"/>
<rect x="852.4" y="326" width="21.4" height="18.6" fill="#7d868e" opacity=".8" filter="url(#sh)"/>
<rect x="851.4" y="324.8" width="21.4" height="18.6" fill="#61bcfa" stroke="#2b2f36" stroke-width=".8"/>
<text x="858.8" y="336" font-size="9" font-style="italic" text-anchor="middle" fill="#05080c">z</text>
<text x="864.3" y="332.7" font-size="7.8" text-anchor="middle" fill="#05080c">-1</text>
<rect x="852.4" y="350.6" width="21.4" height="18.4" fill="#7d868e" opacity=".8" filter="url(#sh)"/>
<rect x="851.4" y="349.4" width="21.4" height="18.4" fill="#61bcfa" stroke="#2b2f36" stroke-width=".8"/>
<text x="858.8" y="360.5" font-size="9" font-style="italic" text-anchor="middle" fill="#05080c">z</text>
<text x="864.3" y="357.2" font-size="7.8" text-anchor="middle" fill="#05080c">-1</text>
<rect x="852.4" y="378.6" width="21.4" height="18.2" fill="#7d868e" opacity=".8" filter="url(#sh)"/>
<rect x="851.4" y="377.4" width="21.4" height="18.2" fill="#61bcfa" stroke="#2b2f36" stroke-width=".8"/>
<text x="858.8" y="388.4" font-size="9" font-style="italic" text-anchor="middle" fill="#05080c">z</text>
<text x="864.3" y="385.1" font-size="7.8" text-anchor="middle" fill="#05080c">-1</text>
<rect x="852.4" y="397" width="21.4" height="17.2" fill="#7d868e" opacity=".8" filter="url(#sh)"/>
<rect x="851.4" y="395.8" width="21.4" height="17.2" fill="#61bcfa" stroke="#2b2f36" stroke-width=".8"/>
<text x="858.8" y="406.3" font-size="9" font-style="italic" text-anchor="middle" fill="#05080c">z</text>
<text x="864.3" y="403" font-size="7.8" text-anchor="middle" fill="#05080c">-1</text>
<rect x="852.4" y="414.4" width="21.4" height="18" fill="#7d868e" opacity=".8" filter="url(#sh)"/>
<rect x="851.4" y="413.2" width="21.4" height="18" fill="#61bcfa" stroke="#2b2f36" stroke-width=".8"/>
<text x="858.8" y="424.1" font-size="9" font-style="italic" text-anchor="middle" fill="#05080c">z</text>
<text x="864.3" y="420.8" font-size="7.8" text-anchor="middle" fill="#05080c">-1</text>
<path d="M872.6 333.5 L1009.4 333.5" fill="none" stroke="#1a1a1a" stroke-width="0.82"/>
<path d="M1009.4 333.5 L1004.5 330.7 L1004.5 336.3 Z" fill="#000"/>
<circle cx="890.5" cy="333.5" r="1.4" fill="#000"/>
<path d="M890.5 333.8 L890.5 347.5 L904 347.5" fill="none" stroke="#1a1a1a" stroke-width="0.82"/>
<path d="M904 347.5 L899.1 344.7 L899.1 350.3 Z" fill="#000"/>
<path d="M872.6 358.5 L904 358.5" fill="none" stroke="#1a1a1a" stroke-width="0.82"/>
<path d="M904 358.5 L899.1 355.7 L899.1 361.3 Z" fill="#000"/>
<rect x="905.2" y="342.4" width="21.4" height="23.8" fill="#b4b8bc" opacity=".7"/>
<rect x="904.2" y="341.2" width="21.4" height="23.8" fill="#fff" stroke="#262626" stroke-width=".9"/>
<text x="914.6" y="355.4" font-size="7.2" text-anchor="middle" fill="#1c1c1c">OR</text>
<path d="M925.6 355.5 L939.5 355.5 L939.5 374" fill="none" stroke="#1a1a1a" stroke-width="0.82"/>
<path d="M939.5 374 L936.7 369.1 L942.3 369.1 Z" fill="#000"/>
<rect x="1010.2" y="328.3" width="22" height="13.2" rx="6.6" fill="#9a9ea2" opacity=".7" filter="url(#sh)"/>
<rect x="1009.2" y="327.2" width="22" height="13.2" rx="6.6" fill="#fff" stroke="#1e1e1e" stroke-width="1.05"/>
<text x="1020.2" y="335.7" font-size="6.6" text-anchor="middle" fill="#222">4</text>
<text x="1020.2" y="348.7" font-size="6.8" text-anchor="middle" fill="#1c1c1c">bit_clk</text>
<rect x="905.5" y="375.8" width="70.4" height="59.6" fill="#b4b8bc" opacity=".7"/>
<rect x="904.2" y="374.4" width="70.4" height="59.6" fill="url(#g1)" stroke="#111" stroke-width="1.5"/>
<text x="906.3" y="385.3" font-size="6.3" text-anchor="start" fill="#1c1c1c">In1</text>
<text x="906.3" y="406.3" font-size="6.3" text-anchor="start" fill="#1c1c1c">EmptyReg</text>
<text x="906.3" y="427.8" font-size="6.3" text-anchor="start" fill="#1c1c1c">Reset</text>
<text x="972.3" y="385.3" font-size="6.3" text-anchor="end" fill="#1c1c1c">Bits</text>
<text x="972.3" y="406.3" font-size="6.3" text-anchor="end" fill="#1c1c1c">CRC</text>
<text x="972.3" y="427.8" font-size="6.3" text-anchor="end" fill="#1c1c1c">Valid</text>
<text x="939.4" y="442.8" font-size="7" text-anchor="middle" fill="#1c1c1c">CalcCRC</text>
<path d="M938.5 382.8 L940.2 377.4 M937.6 380.3 h3.3 M940.2 377.4 h1.4" fill="none" stroke="#111" stroke-width=".85"/>
<path d="M872.6 386.4 C884 386.4 886 383 896 383 H904" fill="none" stroke="#222" stroke-width=".9"/><path d="M904 383 l-5.2 -2.7 v5.4 Z" fill="#000"/>
<path d="M872.6 404.5 L904 404.5" fill="none" stroke="#1a1a1a" stroke-width="0.82"/>
<path d="M904 404.5 L899.1 401.7 L899.1 407.3 Z" fill="#000"/>
<path d="M872.6 421.4 C884 421.4 886 425.5 896 425.5 H904" fill="none" stroke="#222" stroke-width=".9"/><path d="M904 425.5 l-5.2 -2.7 v5.4 Z" fill="#000"/>
<path d="M974.6 383.5 L1009.4 383.5" fill="none" stroke="#1a1a1a" stroke-width="0.82"/>
<path d="M1009.4 383.5 L1004.5 380.7 L1004.5 386.3 Z" fill="#000"/>
<circle cx="989.5" cy="383.5" r="1.4" fill="#000"/>
<path d="M989.5 383 L989.5 362.5 L1076.5 362.5" fill="none" stroke="#1a1a1a" stroke-width="0.82"/>
<path d="M1076.5 362.5 L1071.6 359.7 L1071.6 365.3 Z" fill="#000"/>
<path d="M974.6 404.5 L1009.4 404.5" fill="none" stroke="#1a1a1a" stroke-width="0.82"/>
<path d="M1009.4 404.5 L1004.5 401.7 L1004.5 407.3 Z" fill="#000"/>
<path d="M974.6 425.5 L1059 425.5" fill="none" stroke="#1a1a1a" stroke-width="0.82"/>
<path d="M1059 425.5 L1054.1 422.7 L1054.1 428.3 Z" fill="#000"/>
<rect x="1010.4" y="379.3" width="21.6" height="10.2" rx="5.1" fill="#9a9ea2" opacity=".7" filter="url(#sh)"/>
<rect x="1009.4" y="378.2" width="21.6" height="10.2" rx="5.1" fill="#fff" stroke="#1e1e1e" stroke-width="1.05"/>
<text x="1020.2" y="385.2" font-size="6.6" text-anchor="middle" fill="#222">5</text>
<text x="1020.2" y="396.7" font-size="6.8" text-anchor="middle" fill="#1c1c1c">bits</text>
<rect x="1010.4" y="400.4" width="21.6" height="10.2" rx="5.1" fill="#9a9ea2" opacity=".7" filter="url(#sh)"/>
<rect x="1009.4" y="399.3" width="21.6" height="10.2" rx="5.1" fill="#fff" stroke="#1e1e1e" stroke-width="1.05"/>
<text x="1020.2" y="406.3" font-size="6.6" text-anchor="middle" fill="#222">6</text>
<text x="1020.2" y="417.8" font-size="6.8" text-anchor="middle" fill="#1c1c1c">crc</text>
<rect x="1077.8" y="351.8" width="53.4" height="23.4" fill="#b4b8bc" opacity=".7"/>
<rect x="1076.6" y="350.6" width="53.4" height="23.4" fill="#fff" stroke="#262626" stroke-width=".9"/>
<text x="1103" y="364" font-size="6.9" text-anchor="middle" fill="#1c1c1c">uint16</text>
<text x="1102.6" y="382.9" font-size="6.9" text-anchor="middle" fill="#1c1c1c">Data Type Conversion</text>
<path d="M1130 362.5 L1175 362.5" fill="none" stroke="#1a1a1a" stroke-width="0.82"/>
<path d="M1175 362.5 L1170.1 359.7 L1170.1 365.3 Z" fill="#000"/>
<rect x="1175.6" y="356.5" width="22" height="13.2" rx="6.6" fill="#9a9ea2" opacity=".7" filter="url(#sh)"/>
<rect x="1174.6" y="355.4" width="22" height="13.2" rx="6.6" fill="#fff" stroke="#1e1e1e" stroke-width="1.05"/>
<text x="1185.6" y="363.9" font-size="6.6" text-anchor="middle" fill="#222">9</text>
<text x="1185.6" y="376.9" font-size="6.8" text-anchor="middle" fill="#1c1c1c">data</text>
<rect x="1060.3" y="399" width="88.4" height="38.6" fill="#b4b8bc" opacity=".7"/>
<rect x="1059" y="397.6" width="88.4" height="38.6" fill="url(#g1)" stroke="#2e2e2e" stroke-width="0.85"/>
<text x="1061.1" y="409.8" font-size="6.3" text-anchor="start" fill="#1c1c1c">bit_process</text>
<text x="1061.1" y="427.8" font-size="6.3" text-anchor="start" fill="#1c1c1c">crc_valid</text>
<text x="1145.1" y="420.3" font-size="6.3" text-anchor="end" fill="#1c1c1c">frame_valid</text>
<text x="1103.2" y="444.8" font-size="7" text-anchor="middle" fill="#1c1c1c">FrameDetect</text>
<path d="M1147.4 418.5 L1175 418.5" fill="none" stroke="#1a1a1a" stroke-width="0.82"/>
<path d="M1175 418.5 L1170.1 415.7 L1170.1 421.3 Z" fill="#000"/>
<rect x="1175.6" y="412.8" width="22" height="13.2" rx="6.6" fill="#9a9ea2" opacity=".7" filter="url(#sh)"/>
<rect x="1174.6" y="411.7" width="22" height="13.2" rx="6.6" fill="#fff" stroke="#1e1e1e" stroke-width="1.05"/>
<text x="1185.6" y="420.2" font-size="6.6" text-anchor="middle" fill="#222">10</text>
<text x="1185.6" y="433.2" font-size="6.8" text-anchor="middle" fill="#1c1c1c">frame_valid</text>
<rect x="1202.4" y="475.4" width="12.4" height="7.6" fill="#f1f1f1"/>
<g>
<path d="M1093.5 457.4 C1096.5 455.6 1098.6 453.4 1098 449.8 C1101 453 1103 457.4 1103 462.6 A17.7 17.7 0 1 1 1093.5 457.4 Z" fill="#c9c9c9" transform="translate(1,1.1)" opacity=".8"/>
<path d="M1093.5 457.4 C1096.5 455.6 1098.6 453.4 1098 449.8 C1101 453 1103 457.4 1103 462.6 A17.7 17.7 0 1 1 1093.5 457.4 Z" fill="#ffffff" stroke="#e4e4e4" stroke-width=".9"/>
<path d="M1081.4 473.2 L1094.8 464.2 M1098.2 476.4 L1084.4 487.4" stroke="#d6d6d6" stroke-width="1.5" fill="none"/>
<circle cx="1079.8" cy="474.8" r="2.1" fill="#fff" stroke="#cfcfcf" stroke-width="1.3"/><circle cx="1100" cy="474.8" r="2.1" fill="#fff" stroke="#cfcfcf" stroke-width="1.3"/>
</g>
<text x="1115.2" y="475.6" font-size="17" font-weight="bold" font-style="italic" fill="#b4b4b4" textLength="84" lengthAdjust="spacingAndGlyphs">电子发烧友</text>
<text x="1114.2" y="474.6" font-size="17" font-weight="bold" font-style="italic" fill="#fff" stroke="#e0e0e0" stroke-width=".5" textLength="84" lengthAdjust="spacingAndGlyphs" style="paint-order:stroke">电子发烧友</text>
<text x="1115.4" y="490.2" font-size="9.8" font-weight="bold" fill="#adadad" textLength="96" lengthAdjust="spacingAndGlyphs">www.elecfans.com</text>
<text x="1114.4" y="489.2" font-size="9.8" font-weight="bold" fill="#fff" stroke="#dcdcdc" stroke-width=".4" textLength="96" lengthAdjust="spacingAndGlyphs" style="paint-order:stroke">www.elecfans.com</text>
<text x="1127.6" y="494.1" font-size="8.8" text-anchor="start" fill="#1c1c8c" textLength="74" lengthAdjust="spacingAndGlyphs">VariableStepDiscrete</text>
<path d="M1212.6 489.6 h1.4 v1.4 h-1.4 Z M1209.8 492.4 h1.4 v1.4 h-1.4 Z M1212.6 492.4 h1.4 v1.4 h-1.4 Z M1207 495 h1.4 v1.4 h-1.4 Z M1209.8 495 h1.4 v1.4 h-1.4 Z M1212.6 495 h1.4 v1.4 h-1.4 Z" fill="#b9c0c8"/>
</svg>
</body></html>
